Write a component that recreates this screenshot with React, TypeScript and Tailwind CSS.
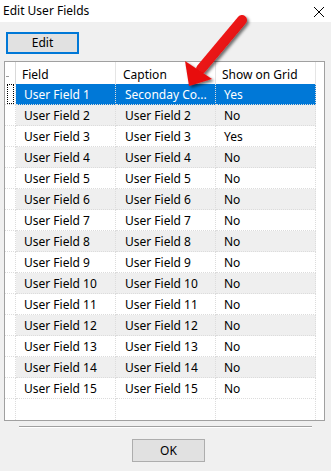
import React from "react";

const rows: [string, string, string][] = [
  ["User Field 1", "Seconday Co...", "Yes"],
  ["User Field 2", "User Field 2", "No"],
  ["User Field 3", "User Field 3", "Yes"],
  ["User Field 4", "User Field 4", "No"],
  ["User Field 5", "User Field 5", "No"],
  ["User Field 6", "User Field 6", "No"],
  ["User Field 7", "User Field 7", "No"],
  ["User Field 8", "User Field 8", "No"],
  ["User Field 9", "User Field 9", "No"],
  ["User Field 10", "User Field 10", "No"],
  ["User Field 11", "User Field 11", "No"],
  ["User Field 12", "User Field 12", "No"],
  ["User Field 13", "User Field 13", "No"],
  ["User Field 14", "User Field 14", "No"],
  ["User Field 15", "User Field 15", "No"],
];

export default function App() {
  return (
    <div
      className="relative w-[331px] h-[471px] bg-[#f0f0f0] text-[12px] text-black overflow-hidden"
      style={{ fontFamily: '"Segoe UI", "Noto Sans", Arial, sans-serif' }}
    >
      {/* Title bar */}
      <div className="h-[22px] bg-white flex items-center justify-between pl-[3px] pr-[6px]">
        <span className="leading-none">Edit User Fields</span>
        <svg width="12" height="12" viewBox="0 0 12 12" className="mt-[2px]">
          <path d="M1 1 L11 11 M11 1 L1 11" stroke="#000" strokeWidth="1" />
        </svg>
      </div>

      {/* Edit button */}
      <div className="pt-[10px] pl-[6px]">
        <button className="w-[73px] h-[22px] border-2 border-[#0078d7] bg-[#e1e1e1] flex items-center justify-center leading-none">
          Edit
        </button>
      </div>

      {/* Grid */}
      <div className="ml-[4px] mt-[7px] w-[321px] h-[360px] border border-[#a0a0a0] bg-white flex flex-col">
        {/* header */}
        <div className="flex h-[22px]">
          <div className="w-[11px] border-r border-[#d9d9d9] relative">
            <div className="absolute left-[1px] top-[14px] w-[3px] h-[1px] bg-[#9a9a9a]" />
          </div>
          <div className="w-[100px] border-r border-[#e5e5e5] pl-[6px] pt-[3px] flex items-center">Field</div>
          <div className="w-[100px] border-r border-[#e5e5e5] pl-[7px] pt-[3px] flex items-center">Caption</div>
          <div className="w-[100px] border-r border-[#e5e5e5] pl-[6px] pt-[3px] flex items-center">Show on Grid</div>
        </div>
        {rows.map((r, i) => {
          const sel = i === 0;
          const bg = sel ? "bg-[#0078d7] text-white" : i % 2 === 1 ? "bg-[#efefef]" : "bg-white";
          return (
            <div key={i} className="flex h-[21px]">
              <div className="w-[11px] border-r border-dotted border-[#dcdcdc] border-b pl-[2px]">
                {sel && <div className="w-[7px] h-[20px] border border-dotted border-black" />}
              </div>
              <div className={`w-[100px] border-r border-b border-dotted border-[#dcdcdc] pl-[8px] pt-[2px] flex items-center whitespace-nowrap ${bg}`}>
                {r[0]}
              </div>
              <div className={`w-[100px] border-r border-b border-dotted border-[#dcdcdc] pl-[9px] pt-[2px] flex items-center whitespace-nowrap ${bg}`}>
                {r[1]}
              </div>
              <div className={`w-[100px] border-r border-b border-dotted border-[#dcdcdc] pl-[8px] pt-[2px] flex items-center whitespace-nowrap ${bg}`}>
                {r[2]}
              </div>
            </div>
          );
        })}
        <div className="flex h-[21px]">
          <div className="w-[11px] border-r border-dotted border-[#dcdcdc]" />
          <div className="w-[100px] border-r border-dotted border-[#dcdcdc]" />
          <div className="w-[100px] border-r border-dotted border-[#dcdcdc]" />
          <div className="w-[100px] border-r border-dotted border-[#dcdcdc]" />
        </div>
      </div>

      {/* separator */}
      <div className="ml-[19px] mt-[5px] w-[293px] h-[2px] border-t border-[#a0a0a0] border-b border-b-white" />

      {/* OK button */}
      <div className="pl-[132px] pt-[11px]">
        <button className="w-[73px] h-[23px] border border-[#adadad] bg-[#e1e1e1] flex items-center justify-center leading-none">
          OK
        </button>
      </div>

      {/* Red arrow annotation */}
      <svg
        className="absolute left-0 top-0 pointer-events-none"
        width="331"
        height="471"
        viewBox="0 0 331 471"
      >
        <defs>
          <filter id="sh" x="-20%" y="-20%" width="140%" height="140%">
            <feDropShadow dx="2" dy="2" stdDeviation="1.5" floodColor="#000" floodOpacity="0.55" />
          </filter>
          <linearGradient id="rg" x1="0" y1="0" x2="1" y2="1">
            <stop offset="0" stopColor="#ff2a2a" />
            <stop offset="1" stopColor="#d40000" />
          </linearGradient>
        </defs>
        <g filter="url(#sh)">
          <line x1="242" y1="20" x2="201" y2="69" stroke="url(#rg)" strokeWidth="10" strokeLinecap="round" />
          <polygon points="185,61 212,79 189,86" fill="#e81010" />
        </g>
      </svg>
    </div>
  );
}
